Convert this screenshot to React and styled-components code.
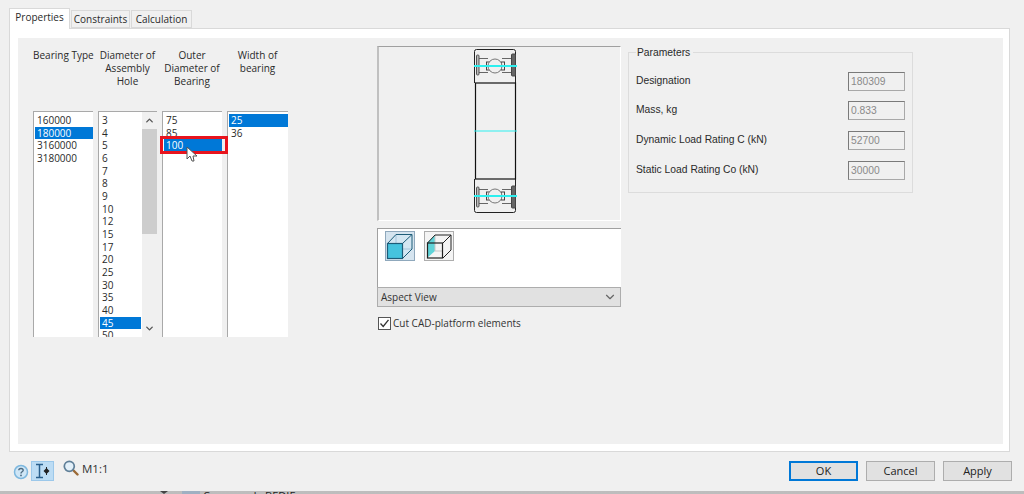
import React from "react";
import styled, { createGlobalStyle } from "styled-components";
import { ChevronDown, ChevronUp } from "lucide-react";

const GlobalStyle = createGlobalStyle`
  html, body {
    margin: 0;
    padding: 0;
    background: #ffffff;
  }
  body {
    font-family: "Open Sans", "Liberation Sans", sans-serif;
    font-size: 10px;
    color: #2a2a2a;
  }
`;

const Page = styled.div`
  width: 1024px;
  height: 494px;
  overflow: hidden;
  background: linear-gradient(#e0e0e0, #bdbdbd);
  display: flex;
  flex-direction: column;
`;

const Dialog = styled.div`
  height: 491px;
  flex: none;
  display: flex;
  flex-direction: column;
  background: #f0f0f0;
  padding: 8px 14px 0 9px;
  box-sizing: border-box;
`;

/* what shows of the window behind the dialog */
const BehindStrip = styled.div`
  flex: 1;
  display: flex;
  align-items: flex-start;
  overflow: hidden;
  padding-left: 160px;
  font-size: 11px;
  line-height: 9px;
  color: #222;
`;

const BehindChevron = styled.div`
  width: 0;
  height: 0;
  border-left: 4px solid transparent;
  border-right: 4px solid transparent;
  border-top: 3px solid #444;
`;

const BehindBox = styled.div`
  width: 18px;
  height: 3px;
  margin: 0 3px 0 14px;
  background: #9fb0c2;
`;

const TabBar = styled.div`
  display: flex;
  align-items: flex-end;
  height: 20px;
  position: relative;
  z-index: 1;
`;

const Tab = styled.div`
  box-sizing: border-box;
  width: ${(p) => p.$w}px;
  height: ${(p) => (p.$active ? 21 : 18)}px;
  margin-bottom: ${(p) => (p.$active ? -1 : 0)}px;
  margin-right: 1px;
  text-align: center;
  line-height: 17px;
  background: ${(p) => (p.$active ? "#ffffff" : "#f0f0f0")};
  border: 1px solid #d9d9d9;
  border-bottom: ${(p) => (p.$active ? "none" : "1px solid #d9d9d9")};
`;

const TabPage = styled.div`
  box-sizing: border-box;
  height: 424px;
  background: #ffffff;
  border: 1px solid #d9d9d9;
  padding: 9px 6px 7px 8px;
`;

const Inner = styled.div`
  height: 100%;
  background: #f0f0f0;
  display: flex;
  padding-left: 15px;
`;

const ListColumns = styled.div`
  display: flex;
  position: relative;
  align-self: flex-start;
`;

const Column = styled.div`
  width: ${(p) => p.$w}px;
  margin-right: ${(p) => p.$gap}px;
`;

const Heading = styled.div`
  height: 62px;
  padding-top: 11px;
  text-align: center;
  line-height: 13px;
  white-space: nowrap;
`;

const ListBox = styled.div`
  box-sizing: border-box;
  height: 226px;
  background: #ffffff;
  border-top: 1px solid #a9a9a9;
  border-left: 1px solid #a9a9a9;
  padding: 2px 0 0 1px;
  display: flex;
  overflow: hidden;
`;

const Items = styled.div`
  flex: 1;
  min-width: 0;
`;

const Item = styled.div`
  height: 12.67px;
  line-height: 12.67px;
  padding-left: 2px;
  background: ${(p) => (p.$selected ? "#0078d7" : "transparent")};
  color: ${(p) => (p.$selected ? "#ffffff" : "#2a2a2a")};
`;

const ScrollBar = styled.div`
  width: 15px;
  margin-top: -2px;
  margin-left: 1px;
  background: #f0f0f0;
  display: flex;
  flex-direction: column;
  align-items: center;
  color: #555;
`;

const ScrollArrow = styled.div`
  height: 17px;
  display: flex;
  align-items: center;
  justify-content: center;
`;

const ScrollThumb = styled.div`
  width: 15px;
  height: 105px;
  background: #cdcdcd;
  margin-bottom: 86px;
`;

const Highlight = styled.div`
  position: absolute;
  left: 127px;
  top: 98px;
  width: 68px;
  height: 18px;
  box-sizing: border-box;
  border: 3px solid #e8141e;
`;

const Pointer = styled.svg`
  position: absolute;
  left: 153px;
  top: 108px;
`;

const PreviewColumn = styled.div`
  width: 244px;
  margin-left: 89px;
  padding-top: 8px;
`;

const Drawing = styled.div`
  box-sizing: border-box;
  height: 175px;
  background: #f0f0f0;
  border-top: 1px solid #a0a0a0;
  border-left: 2px solid #c0c0c0;
  border-right: 1px solid #ffffff;
  border-bottom: 1px solid #ffffff;
  padding-left: 93px;
`;

const ViewPicker = styled.div`
  box-sizing: border-box;
  height: 59px;
  margin-top: 7px;
  background: #ffffff;
  border-top: 1px solid #a0a0a0;
  border-left: 1px solid #a0a0a0;
  padding: 2px 0 0 7px;
  display: flex;
  gap: 9px;
  align-items: flex-start;
`;

const ViewButton = styled.div`
  width: 30px;
  height: 30px;
  box-sizing: border-box;
  border: 1px solid ${(p) => (p.$active ? "#8fa8bc" : "#adadad")};
  background: ${(p) => (p.$active ? "#d5e4ef" : "#f4f4f4")};
`;

const Select = styled.div`
  box-sizing: border-box;
  height: 20px;
  background: #e1e1e1;
  border: 1px solid #adadad;
  display: flex;
  align-items: center;
  justify-content: space-between;
  padding: 0 3px 0 3px;
  color: #333;
`;

const CheckRow = styled.div`
  display: flex;
  align-items: center;
  gap: 2px;
  margin-top: 9px;
  padding-left: 1px;
  color: #333;
`;

const CheckBox = styled.div`
  width: 13px;
  height: 13px;
  box-sizing: border-box;
  border: 1px solid #555;
  background: #ffffff;
  display: flex;
  align-items: center;
  justify-content: center;
`;

const Fieldset = styled.div`
  position: relative;
  box-sizing: border-box;
  width: 285px;
  height: 141px;
  margin: 14px 0 0 7px;
  border: 1px solid #dcdcdc;
  padding: 10px 7px 0 7px;
  display: flex;
  flex-direction: column;
  font-family: "Liberation Sans", Arial, sans-serif;
  font-size: 10.3px;
`;

const Legend = styled.div`
  position: absolute;
  left: 7px;
  top: -7px;
  padding: 0 3px 0 1px;
  background: #f0f0f0;
  line-height: 13px;
`;

const ParamRow = styled.div`
  height: 19px;
  margin-top: ${(p) => (p.$first ? 8.5 : 10.7)}px;
  display: flex;
  align-items: center;
  justify-content: space-between;
`;

const ParamLabel = styled.span`
  padding-bottom: 2px;
`;

const ValueBox = styled.div`
  box-sizing: border-box;
  width: 57px;
  height: 19px;
  line-height: 17px;
  padding-left: 2px;
  background: #f0f0f0;
  border: 1px solid #7a7a7a;
  border-right-color: #a8a8a8;
  border-bottom-color: #a8a8a8;
  color: #8a8a8a;
`;

const Footer = styled.div`
  flex: 1;
  display: flex;
  align-items: flex-start;
  justify-content: space-between;
  padding: 9px 0 0 4px;
`;

const ToolGroup = styled.div`
  display: flex;
  align-items: flex-start;
`;

const ToggleTool = styled.div`
  width: 23px;
  height: 20px;
  margin-left: 2px;
  box-sizing: border-box;
  background: #bcdcf4;
  border: 1px solid #9cc8ea;
  display: flex;
  align-items: center;
  justify-content: center;
`;

const ScaleLabel = styled.span`
  margin-left: 3px;
  font-size: 11.5px;
  line-height: 16px;
  color: #333;
`;

const ButtonRow = styled.div`
  display: flex;
  gap: 8px;
  margin-right: -2px;
`;

const Button = styled.div`
  box-sizing: border-box;
  width: 69px;
  height: 20px;
  background: #e1e1e1;
  text-align: center;
  font-size: 11px;
  border: ${(p) => (p.$primary ? "2px solid #0078d7" : "1px solid #adadad")};
  line-height: ${(p) => (p.$primary ? 16 : 18)}px;
  color: #222;
`;

const columns = [
  { title: ["Bearing Type"], w: 60, gap: 5, items: ["160000", "180000", "3160000", "3180000"], selected: "180000" },
  {
    title: ["Diameter of", "Assembly", "Hole"],
    w: 59,
    gap: 5,
    items: ["3", "4", "5", "6", "7", "8", "9", "10", "12", "15", "17", "20", "25", "30", "35", "40", "45", "50"],
    selected: "45",
    scroll: true,
  },
  { title: ["Outer", "Diameter of", "Bearing"], w: 60, gap: 5, items: ["75", "85", "100"], selected: "100" },
  { title: ["Width of", "bearing"], w: 61, gap: 0, items: ["25", "36"], selected: "25" },
];

const params = [
  ["Designation", "180309"],
  ["Mass, kg", "0.833"],
  ["Dynamic Load Rating C (kN)", "52700"],
  ["Static Load Rating Co (kN)", "30000"],
];

// top half of the section, the bottom half is the same thing flipped
const BearingHalf = ({ flip }) => (
  <g transform={flip ? "matrix(1 0 0 -1 0 168)" : undefined}>
    <path d="M2.5 36V4.5Q2.5 2.5 4.5 2.5H41.5Q43.5 2.5 43.5 4.5V36" fill="none" stroke="#222" strokeWidth="1" />
    <path d="M5 11.5H16M30 11.5H41M5 25.5H16M30 25.5H41" stroke="#666" strokeWidth="1" />
    <rect x="4.5" y="8" width="2.5" height="20" rx="1" fill="#bbb" stroke="#555" strokeWidth="1" />
    <rect x="39.5" y="7" width="4" height="22" rx="1" fill="#666" stroke="#444" strokeWidth="1" />
    <rect x="14.5" y="15" width="3" height="8" fill="none" stroke="#444" strokeWidth="1" />
    <rect x="29.5" y="15" width="3" height="8" fill="none" stroke="#444" strokeWidth="1" />
    <circle cx="23" cy="19" r="7" fill="#f0f0f0" stroke="#777" strokeWidth="1" />
    <path d="M2 19H45" stroke="#2df0f0" strokeWidth="2" />
  </g>
);

const BearingSection = () => (
  <svg width="46" height="172" viewBox="0 0 46 172">
    <BearingHalf />
    <BearingHalf flip />
    <rect x="3.5" y="36" width="40" height="96" fill="none" stroke="#111" strokeWidth="1.2" />
    <path d="M2 84H45" stroke="#2df0f0" strokeWidth="1" />
  </svg>
);

const ShadedCube = () => (
  <svg width="28" height="28" viewBox="0 0 28 28">
    <path d="M1 11L10 2H26V17L17 26H1Z" fill="#d3e6f2" />
    <path d="M10 2V17H26M10 17L1 26" fill="none" stroke="#a5c4da" strokeWidth="1" />
    <rect x="1.5" y="11.5" width="15" height="15" fill="#45c3de" stroke="#1d5c78" strokeWidth="1.2" />
    <path d="M1.5 11.5L10 2.5H26V17L16.5 26.5M16.5 11.5L26 2.5" fill="none" stroke="#1d5c78" strokeWidth="1" />
  </svg>
);

const SideCube = () => (
  <svg width="28" height="28" viewBox="0 0 28 28">
    <path d="M2 11L10 3V19L2 26Z" fill="#5fd3d8" />
    <path d="M10 3V19H18" fill="none" stroke="#c8c8c8" strokeWidth="1" />
    <rect x="2.5" y="11" width="15" height="15" fill="none" stroke="#222" strokeWidth="1.2" />
    <path d="M2.5 11L10 3H26V18L18 26M18 11L26 3" fill="none" stroke="#222" strokeWidth="1" />
  </svg>
);

const HelpIcon = () => (
  <svg width="16" height="16" viewBox="0 0 16 16" style={{ marginTop: 3 }}>
    <circle cx="8" cy="8" r="6.5" fill="#cfe6f6" stroke="#7db7de" strokeWidth="1.5" />
    <path d="M5.8 6.3C5.8 3.8 10.2 3.8 10.2 6.3C10.2 7.8 8 7.8 8 9.4" fill="none" stroke="#4d6a80" strokeWidth="1.4" />
    <circle cx="8" cy="11.4" r="0.9" fill="#4d6a80" />
  </svg>
);

const DimensionIcon = () => (
  <svg width="18" height="16" viewBox="0 0 18 16">
    <path d="M2 1.5H9M2 14.5H9M5.5 1.5V14.5" stroke="#2a5f8c" strokeWidth="1.5" fill="none" />
    <path d="M12.5 4V12" stroke="#222" strokeWidth="1" />
    <path d="M12 5.5L9.5 8L12 10.5ZM13 5.5L15.5 8L13 10.5Z" fill="#222" />
  </svg>
);

const Magnifier = () => (
  <svg width="16" height="16" viewBox="0 0 16 16" style={{ marginLeft: 9, marginTop: -1 }}>
    <path d="M10 10L14.5 14.5" stroke="#9c6a36" strokeWidth="2.4" strokeLinecap="round" />
    <circle cx="6.3" cy="6.3" r="5" fill="#e3f0f9" stroke="#5f7f98" strokeWidth="1.7" />
  </svg>
);

export default function App() {
  return (
    <Page>
      <GlobalStyle />
      <Dialog>
        <TabBar>
          <Tab $active $w={61}>Properties</Tab>
          <Tab $w={59}>Constraints</Tab>
          <Tab $w={61}>Calculation</Tab>
        </TabBar>
        <TabPage>
          <Inner>
            <ListColumns>
              {columns.map((col) => (
                <Column key={col.title[0]} $w={col.w} $gap={col.gap}>
                  <Heading>
                    {col.title.map((line) => (
                      <div key={line}>{line}</div>
                    ))}
                  </Heading>
                  <ListBox>
                    <Items>
                      {col.items.map((item) => (
                        <Item key={item} $selected={item === col.selected}>{item}</Item>
                      ))}
                    </Items>
                    {col.scroll && (
                      <ScrollBar>
                        <ScrollArrow><ChevronUp size={11} strokeWidth={3} /></ScrollArrow>
                        <ScrollThumb />
                        <ScrollArrow><ChevronDown size={11} strokeWidth={3} /></ScrollArrow>
                      </ScrollBar>
                    )}
                  </ListBox>
                </Column>
              ))}
              <Highlight />
              <Pointer width="13" height="19" viewBox="0 0 13 19">
                <path d="M1 1V13L4 10L6 15H8L7 10H11Z" fill="#ffffff" stroke="#555" strokeWidth="1" />
              </Pointer>
            </ListColumns>

            <PreviewColumn>
              <Drawing>
                <BearingSection />
              </Drawing>
              <ViewPicker>
                <ViewButton $active><ShadedCube /></ViewButton>
                <ViewButton><SideCube /></ViewButton>
              </ViewPicker>
              <Select>
                <span>Aspect View</span>
                <ChevronDown size={14} color="#666" />
              </Select>
              <CheckRow>
                <CheckBox>
                  <svg width="11" height="11" viewBox="0 0 11 11">
                    <path d="M1.5 5.5L4.2 8.5L9.5 1.8" fill="none" stroke="#333" strokeWidth="1.3" />
                  </svg>
                </CheckBox>
                <span>Cut CAD-platform elements</span>
              </CheckRow>
            </PreviewColumn>

            <Fieldset>
              <Legend>Parameters</Legend>
              {params.map(([label, value], i) => (
                <ParamRow key={label} $first={i === 0}>
                  <ParamLabel>{label}</ParamLabel>
                  <ValueBox>{value}</ValueBox>
                </ParamRow>
              ))}
            </Fieldset>
          </Inner>
        </TabPage>
        <Footer>
          <ToolGroup>
            <HelpIcon />
            <ToggleTool><DimensionIcon /></ToggleTool>
            <Magnifier />
            <ScaleLabel>M1:1</ScaleLabel>
          </ToolGroup>
          <ButtonRow>
            <Button $primary>OK</Button>
            <Button>Cancel</Button>
            <Button>Apply</Button>
          </ButtonRow>
        </Footer>
      </Dialog>
      <BehindStrip>
        <BehindChevron />
        <BehindBox />
        <span>Command : BEDIE</span>
      </BehindStrip>
    </Page>
  );
}
